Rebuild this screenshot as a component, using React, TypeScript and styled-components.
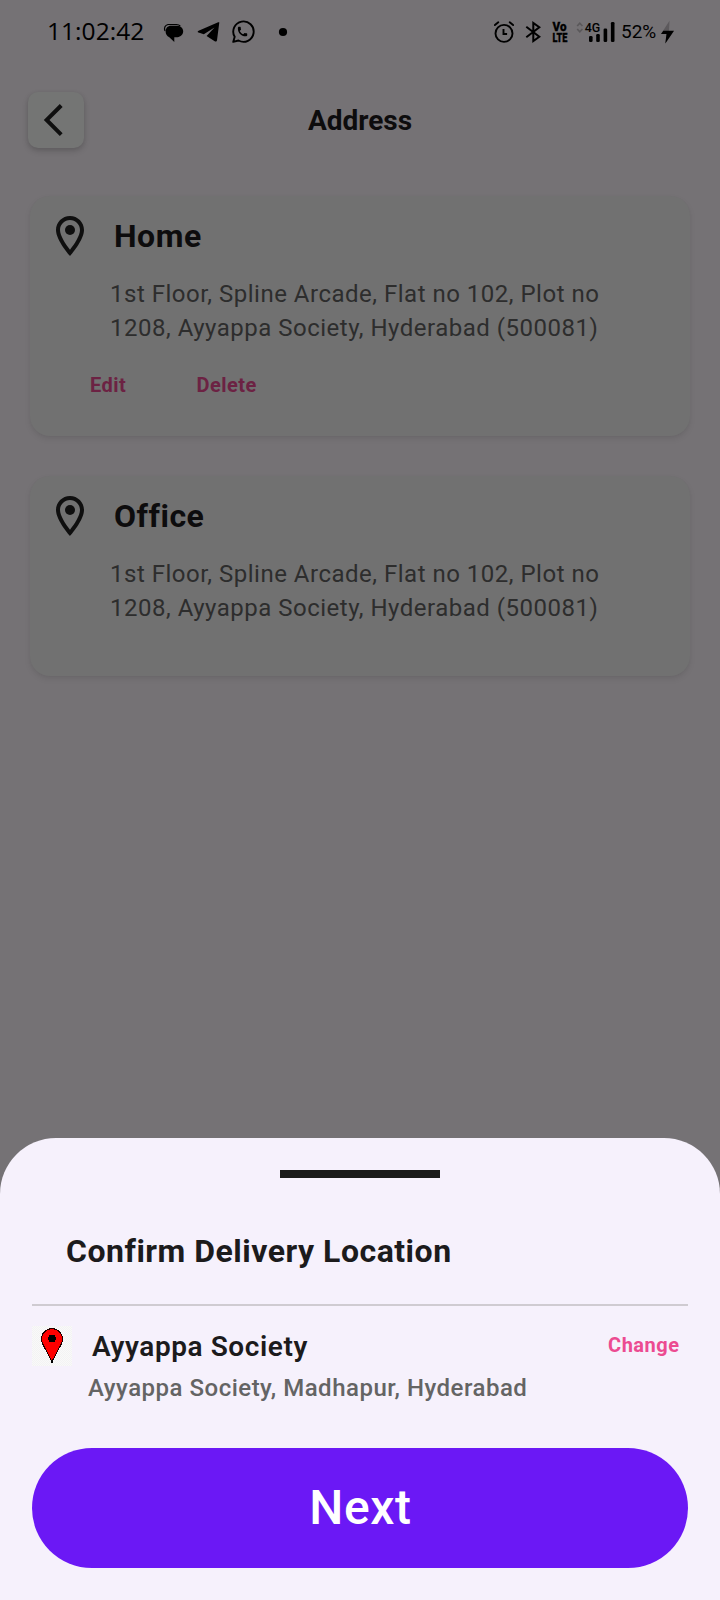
import React from 'react';
import styled, { createGlobalStyle } from 'styled-components';

const GlobalStyle = createGlobalStyle`
  *, *::before, *::after { box-sizing: border-box; }
  body {
    margin: 0;
    background: #757275;
    font-family: Roboto, "Liberation Sans", sans-serif;
  }
  h1, h2, p { margin: 0; }
  svg { display: block; flex: none; }
  button { border: 0; padding: 0; margin: 0; background: none; font-family: inherit; cursor: pointer; }
`;

const Screen = styled.div`
  position: relative;
  width: 720px;
  height: 1600px;
  overflow: hidden;
  background: #757275;
`;

const StatusBar = styled.div`
  display: flex;
  align-items: center;
  justify-content: space-between;
  height: 64px;
  padding: 0 46px 0 47px;
  color: #000;
`;

const StatusGroup = styled.div`
  display: flex;
  align-items: center;
`;

const Clock = styled.span`
  width: 97px;
  margin-right: 19px;
  padding-bottom: 2px;
  font-family: "Open Sans", sans-serif;
  font-size: 24.5px;
  font-weight: 400;
  line-height: 32px;
  letter-spacing: 0.05px;
`;

const StatusIcon = styled.svg<{ $gap?: number }>`
  margin-right: ${({ $gap = 0 }) => $gap}px;
`;

const VoLte = styled.svg`
  margin-right: 8.5px;
  overflow: visible;
  font-family: Roboto, sans-serif;
  font-size: 13.5px;
  font-weight: 900;
`;

const Battery = styled.span`
  width: 37px;
  margin-right: 3px;
  font-size: 19px;
  line-height: 24px;
`;

const Header = styled.header`
  display: grid;
  grid-template-columns: 56px 1fr 56px;
  align-items: center;
  height: 56px;
  margin: 28px 28px 48px;
`;

const BackButton = styled.button`
  display: flex;
  align-items: center;
  width: 56px;
  height: 56px;
  padding-left: 15px;
  border-radius: 10px;
  background: #747574;
  box-shadow: 0 3px 6px rgba(0, 0, 0, 0.16), 0 1px 4px rgba(0, 0, 0, 0.06);
`;

const PageTitle = styled.h1`
  padding-top: 2px;
  color: #0d0c0d;
  font-size: 28px;
  font-weight: 700;
  line-height: 36px;
  text-align: center;
`;

const CardList = styled.main`
  display: flex;
  flex-direction: column;
  gap: 40px;
  padding: 0 30px;
`;

const Card = styled.section<{ $height: number }>`
  height: ${({ $height }) => $height}px;
  padding: 16px;
  border-radius: 20px;
  background: #717171;
  box-shadow: 0 3px 6px rgba(0, 0, 0, 0.08), 0 1px 3px rgba(0, 0, 0, 0.03);
`;

const CardHead = styled.div`
  display: flex;
  align-items: center;
  gap: 20px;
  height: 48px;
`;

const CardTitle = styled.h2`
  color: #0d0c0d;
  font-size: 32px;
  font-weight: 700;
  line-height: 40px;
  letter-spacing: 0.5px;
`;

const CardAddress = styled.p`
  width: 520px;
  margin: 17px 0 0 64px;
  color: #2d2d2d;
  font-size: 24px;
  line-height: 34px;
  letter-spacing: 0.5px;
`;

const CardActions = styled.div`
  display: flex;
  gap: 70px;
  margin: 28px 0 0 44px;
`;

const TextButton = styled.button<{ $dimmed?: boolean }>`
  color: ${({ $dimmed }) => ($dimmed ? '#6c2243' : '#ec4b91')};
  font-size: 20px;
  font-weight: 700;
  line-height: 24px;
  letter-spacing: 0.5px;
`;

const Sheet = styled.aside`
  position: absolute;
  inset: auto 0 0;
  display: flex;
  flex-direction: column;
  height: 462px;
  padding: 32px;
  border-radius: 56px 56px 0 0;
  background: #f6f1fc;
`;

const Handle = styled.div`
  align-self: center;
  width: 160px;
  height: 8px;
  background: #1b1b1b;
`;

const SheetTitle = styled.h2`
  margin: 54px 0 0 34px;
  color: #1c1b1c;
  font-size: 32px;
  font-weight: 700;
  line-height: 38px;
  letter-spacing: 0.5px;
`;

const Divider = styled.hr`
  width: 100%;
  height: 2px;
  margin: 34px 0 20px;
  border: 0;
  background: #cfcbd1;
`;

const PlaceRow = styled.div`
  display: flex;
  align-items: center;
  height: 40px;
  padding-right: 8.5px;

  ${TextButton} {
    padding-bottom: 2px;
  }
`;

const PinTile = styled.div`
  display: flex;
  justify-content: center;
  width: 40px;
  height: 40px;
  background: repeating-conic-gradient(#f9f9f9 0 25%, #f3f3f3 0 50%) 0 0 / 2px 2px;
`;

const PlaceName = styled.h2`
  flex: 1;
  padding: 2px 0 0 20px;
  color: #1c1b1c;
  font-size: 28px;
  font-weight: 600;
  line-height: 36px;
  letter-spacing: 0.57px;
`;

const PlaceDetail = styled.p`
  margin: 8px 0 46px 56px;
  color: #646464;
  font-size: 24px;
  font-weight: 500;
  line-height: 28px;
  letter-spacing: 0.5px;
`;

const NextButton = styled.button`
  height: 120px;
  padding-left: 1px;
  border-radius: 60px;
  background: #6b18f5;
  color: #fff;
  font-size: 48px;
  font-weight: 500;
  line-height: 56px;
  letter-spacing: 0.6px;
`;

const PlaceIcon = () => (
  <svg width="48" height="48" viewBox="0 0 24 24" fill="#0f0f0f">
    <path d="M12 2C8.13 2 5 5.13 5 9c0 5.25 7 13 7 13s7-7.75 7-13c0-3.87-3.13-7-7-7zM7 9c0-2.76 2.24-5 5-5s5 2.24 5 5c0 2.88-2.88 7.19-5 9.88C9.92 16.21 7 11.85 7 9z" />
    <circle cx="12" cy="9" r="2.5" />
  </svg>
);

const addresses = [
  { name: 'Home', height: 240, editable: true },
  { name: 'Office', height: 200, editable: false },
];

export default function App() {
  return (
    <Screen>
      <GlobalStyle />
      <StatusBar>
        <StatusGroup>
          <Clock>11:02:42</Clock>
          <StatusIcon $gap={13} width="21" height="24" viewBox="0 0 21 24">
            <path d="M2 11C.8 8 2 5 5 4.500H13.500C15.500 4.500 16.500 5.200 17.200 6" fill="none" stroke="#000" strokeWidth="1.200" />
            <path d="M8 5.800h6.500c3.200 0 5.700 2.500 5.700 5.500s-2.500 5.700-5.700 5.900h-3.200V22l-5-4.800C3.800 15.800 2.600 14 2.600 11.400c0-3.200 2.200-5.600 5.400-5.600z" />
          </StatusIcon>
          <StatusIcon $gap={11} width="23" height="22" viewBox="0 0 23 22">
            <path d="M22.300 1.600 20 19.200c-.2 1.300-1.200 1.700-2.300 1L9.600 14.900l7.900-8.300-10.700 6.600-5.300-1.700c-1.100-.4-1.100-1.300.1-1.800L20.600 1.400c.8-.3 1.700-.3 1.700.2z" />
          </StatusIcon>
          <StatusIcon $gap={23} width="24" height="26" viewBox="0.500 0 24 26">
            <path d="M2.700 22.900 4.200 17.800A10.200 10.200 0 1 1 8 21.500z" fill="none" stroke="#000" strokeWidth="1.900" strokeLinejoin="round" />
            <path transform="translate(5.800 6.300) scale(.52)" d="M6.620 10.790c1.440 2.830 3.760 5.140 6.590 6.590l2.200-2.200c.27-.27.67-.36 1.020-.24 1.120.37 2.330.57 3.570.57.550 0 1 .450 1 1V19c0 1.400-1.200 2-3 2C9.600 21 3 14.400 3 6c0-1.800.6-3 2-3h2.500c.550 0 1 .450 1 1 0 1.250.200 2.450.570 3.570.110.350.030.740-.250 1.020z" />
          </StatusIcon>
          <StatusIcon width="10" height="10" viewBox="0 0 10 10">
            <circle cx="5" cy="5" r="4.100" />
          </StatusIcon>
        </StatusGroup>
        <StatusGroup>
          <StatusIcon $gap={11} width="20" height="22" viewBox="0 0 20 22" fill="none" stroke="#000" strokeWidth="1.900">
            <circle cx="10" cy="12.400" r="8.500" />
            <path d="M9.500 8v5h3.600" />
            <path d="M.9 4.100 4.300 1.300M19.100 4.100l-3.400-2.800" strokeLinecap="round" />
          </StatusIcon>
          <StatusIcon $gap={11} width="16" height="22" viewBox="0 0 16 22" fill="none" stroke="#000" strokeWidth="2">
            <path d="m1.300 5.800 13 10L8.300 20V2l6 4.200-13 10" />
          </StatusIcon>
          <VoLte width="16" height="22" viewBox="0 0 16 22">
            <text x="0.500" y="10.300" textLength="14" lengthAdjust="spacingAndGlyphs" stroke="#000" strokeWidth=".3">Vo</text>
            <text x="0.500" y="21" textLength="15" lengthAdjust="spacingAndGlyphs" stroke="#000" strokeWidth=".3">LTE</text>
          </VoLte>
          <StatusIcon $gap={6} width="39" height="24" viewBox="0 -1 39 24">
            <path d="M1.200 5 3.800 2.200 6.400 5M1.200 8 3.800 10.800 6.400 8" fill="none" stroke="#5a585a" strokeWidth="1.700" />
            <text x="8.700" y="11.300" fontFamily="Roboto" fontSize="13.500" fontWeight="500" textLength="15.500" lengthAdjust="spacingAndGlyphs">4G</text>
            <rect x="13" y="15" width="3.600" height="6" rx="1.300" />
            <rect x="20.200" y="13" width="3.600" height="8" rx="1.300" />
            <rect x="27.600" y="7.500" width="3.600" height="13.500" rx="1.300" />
            <rect x="34.900" y="1" width="3.600" height="20" rx="1.300" />
          </StatusIcon>
          <Battery>52%</Battery>
          <StatusIcon width="13" height="24" viewBox="0 0 13 24">
            <path d="M8.500.8 0 14h5.500L4.300 23.500 13 11H8z" fill="#5c595c" />
            <path d="M2.300 10.800 0 14h5.500L4.300 23.500 13 10.800z" />
          </StatusIcon>
        </StatusGroup>
      </StatusBar>

      <Header>
        <BackButton aria-label="Back">
          <svg width="20" height="34" viewBox="5.500 1.300 12.500 21.250" fill="#0f0f0f">
            <path d="M17.770 3.770 16 2 6 12l10 10 1.770-1.770L9.540 12z" />
          </svg>
        </BackButton>
        <PageTitle>Address</PageTitle>
      </Header>

      <CardList>
        {addresses.map(({ name, height, editable }) => (
          <Card key={name} $height={height}>
            <CardHead>
              <PlaceIcon />
              <CardTitle>{name}</CardTitle>
            </CardHead>
            <CardAddress>
              1st Floor, Spline Arcade, Flat no 102, Plot no 1208, Ayyappa Society, Hyderabad (500081)
            </CardAddress>
            {editable && (
              <CardActions>
                <TextButton $dimmed>Edit</TextButton>
                <TextButton $dimmed>Delete</TextButton>
              </CardActions>
            )}
          </Card>
        ))}
      </CardList>

      <Sheet>
        <Handle />
        <SheetTitle>Confirm Delivery Location</SheetTitle>
        <Divider />
        <PlaceRow>
          <PinTile>
            <svg width="24" height="40" viewBox="0 0 24 40" shapeRendering="crispEdges">
              <path d="M12 35.500 3.200 19C2 16.700 1.500 14.500 1.500 12.900a10.500 10.300 0 0 1 21 0c0 1.600-.5 3.800-1.700 6.100z" fill="#f00" stroke="#200" strokeWidth="1" />
              <circle cx="12" cy="12.500" r="3.800" />
              <path d="M11 34h2v3h-2z" />
            </svg>
          </PinTile>
          <PlaceName>Ayyappa Society</PlaceName>
          <TextButton>Change</TextButton>
        </PlaceRow>
        <PlaceDetail>Ayyappa Society, Madhapur, Hyderabad</PlaceDetail>
        <NextButton>Next</NextButton>
      </Sheet>
    </Screen>
  );
}
